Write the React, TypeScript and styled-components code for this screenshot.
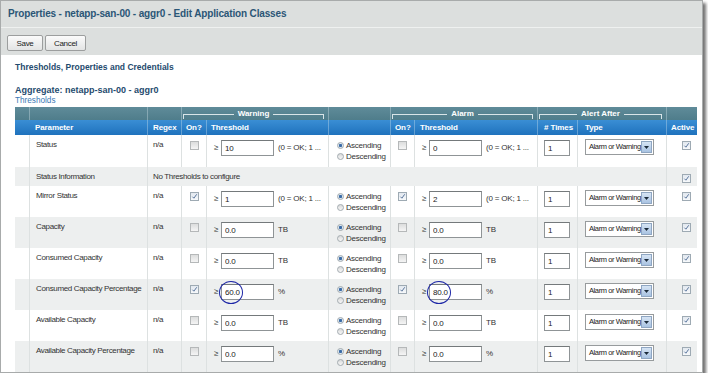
import React from 'react'
import styled, { createGlobalStyle } from 'styled-components'

interface IParam {
  name: string
  warnOn: boolean
  warn: string
  alarmOn: boolean
  alarm: string
  unit: string
  marked?: boolean
}

const STATE_UNIT = '(0 = OK; 1 ...'

const params: IParam[] = [
  { name: 'Status', warnOn: false, warn: '10', alarmOn: false, alarm: '0', unit: STATE_UNIT },
  { name: 'Mirror Status', warnOn: true, warn: '1', alarmOn: true, alarm: '2', unit: STATE_UNIT },
  { name: 'Capacity', warnOn: false, warn: '0.0', alarmOn: false, alarm: '0.0', unit: 'TB' },
  { name: 'Consumed Capacity', warnOn: false, warn: '0.0', alarmOn: false, alarm: '0.0', unit: 'TB' },
  {
    name: 'Consumed Capacity Percentage',
    warnOn: true,
    warn: '60.0',
    alarmOn: true,
    alarm: '80.0',
    unit: '%',
    marked: true,
  },
  { name: 'Available Capacity', warnOn: false, warn: '0.0', alarmOn: false, alarm: '0.0', unit: 'TB' },
  { name: 'Available Capacity Percentage', warnOn: false, warn: '0.0', alarmOn: false, alarm: '0.0', unit: '%' },
]

const COLUMNS = '14px 118px 34px 25px 122px 62px 24px 123px 40px 89px 31px'

const GlobalStyle = createGlobalStyle`
  html, body {
    margin: 0;
    padding: 0;
    background: #fff;
  }
  body {
    font-family: 'Liberation Sans', Arial, sans-serif;
    color: #333;
  }
`

const Frame = styled.div`
  box-sizing: border-box;
  width: 703px;
  height: 373px;
  border: 1px solid #a8abab;
  background: #fff;
  box-shadow: 3px 3px 3px rgba(0, 0, 0, 0.55);
  overflow: hidden;
`

const TitleBar = styled.div`
  height: 26px;
  line-height: 26px;
  padding-left: 7px;
  background: #dcdfde;
  border-bottom: 1px solid #eff1f0;
  color: #2b5676;
  font-size: 10px;
  font-weight: bold;
  letter-spacing: -0.15px;
`

const Toolbar = styled.div`
  display: flex;
  gap: 2px;
  height: 27px;
  box-sizing: border-box;
  padding: 7px 0 0 6px;
  background: #dcdfde;
`

const Button = styled.button<{ $w: number }>`
  width: ${({ $w }) => $w}px;
  height: 16px;
  padding: 0;
  border: 1px solid #9c9e9e;
  border-radius: 2px;
  background: linear-gradient(#fbfbfb, #e3e4e4);
  font-family: inherit;
  font-size: 8px;
  letter-spacing: -0.3px;
  color: #222;
`

const Content = styled.div`
  padding: 7px 0 0 14px;
`

const SectionTitle = styled.div`
  height: 11px;
  line-height: 11px;
  font-size: 8.5px;
  font-weight: bold;
  color: #1f4b6e;
`

const GroupTitle = styled.div`
  margin-top: 12px;
  height: 11px;
  line-height: 11px;
  font-size: 9px;
  font-weight: bold;
  color: #1f4b6e;
`

const SubTitle = styled.div`
  height: 10px;
  line-height: 10px;
  margin-bottom: 1px;
  font-size: 8.2px;
  color: #3a78b5;
`

const Table = styled.div`
  width: 682px;
`

const GroupHeader = styled.div`
  display: grid;
  grid-template-columns: ${COLUMNS};
  height: 13px;
  background: linear-gradient(#5f8b99, #4f7d8b);
`

const ColumnHeader = styled.div`
  display: grid;
  grid-template-columns: ${COLUMNS};
  height: 15px;
  background: linear-gradient(#3a8ed4, #1f72bd);
`

const HeadCell = styled.div<{ $span?: number; $pad?: number; $align?: string; $line?: boolean }>`
  grid-column: span ${({ $span }) => $span ?? 1};
  box-sizing: border-box;
  padding-left: ${({ $pad }) => $pad ?? 5}px;
  padding-right: 4px;
  border-left: ${({ $line }) => ($line ? '1px solid rgba(220, 235, 240, 0.35)' : 'none')};
  text-align: ${({ $align }) => $align ?? 'left'};
  color: #fff;
  font-size: 8px;
  font-weight: bold;
  letter-spacing: -0.1px;
  line-height: 15px;
  white-space: nowrap;
`

const GroupLabel = styled.div<{ $span: number }>`
  grid-column: span ${({ $span }) => $span};
  display: flex;
  align-items: center;
  gap: 4px;
  box-sizing: border-box;
  padding: 0 4px 0 1px;
  border-left: 1px solid rgba(220, 235, 240, 0.35);
  color: #fff;
  font-size: 8px;
  font-weight: bold;
  line-height: 13px;
`

const Bracket = styled.span<{ $side: 'left' | 'right' }>`
  flex: 1;
  height: 4px;
  margin-top: 5px;
  border-top: 1px solid #d9e5e8;
  border-${({ $side }) => $side}: 1px solid #d9e5e8;
`

const Row = styled.div<{ $shade: boolean; $height: number }>`
  display: grid;
  grid-template-columns: ${COLUMNS};
  height: ${({ $height }) => $height}px;
  background: ${({ $shade }) => ($shade ? '#edefef' : '#fff')};
`

const Cell = styled.div<{ $span?: number; $pad?: number; $first?: boolean; $top?: number }>`
  grid-column: span ${({ $span }) => $span ?? 1};
  box-sizing: border-box;
  padding: ${({ $top }) => $top ?? 5}px 0 0 ${({ $pad }) => $pad ?? 5}px;
  border-left: ${({ $first }) => ($first ? 'none' : '1px solid #dde1e1')};
  font-size: 8px;
  line-height: 10px;
  letter-spacing: -0.35px;
  white-space: nowrap;
`

const ThresholdLine = styled.div`
  display: flex;
  align-items: center;
  height: 16px;
`

const Ge = styled.span`
  width: 7px;
  font-size: 8px;
`

const Unit = styled.span`
  margin-left: 4px;
  font-size: 8px;
  letter-spacing: -0.2px;
`

const InputWrap = styled.span`
  position: relative;
  display: inline-block;
`

const TextInput = styled.input<{ $w: number }>`
  box-sizing: border-box;
  width: ${({ $w }) => $w}px;
  height: 16px;
  margin: 0;
  padding: 0 0 0 3px;
  border: 1px solid #8f9496;
  border-top-color: #74797b;
  border-radius: 0;
  background: #fff;
  font-family: inherit;
  font-size: 8px;
  letter-spacing: -0.2px;
  color: #222;
  outline: none;
`

const Marker = styled.span`
  position: absolute;
  left: -2px;
  top: -3px;
  width: 22px;
  height: 21px;
  border: 1.5px solid #1c25a6;
  border-radius: 50%;
  pointer-events: none;
`

const Box = styled.span<{ $on: boolean }>`
  position: relative;
  display: block;
  box-sizing: border-box;
  width: 9px;
  height: 9px;
  margin-top: 1px;
  border: 1px solid ${({ $on }) => ($on ? '#9eaab3' : '#b5b8b9')};
  background: ${({ $on }) =>
    $on ? 'linear-gradient(#e2e8ef, #f7f9fb)' : 'linear-gradient(#dcdddd, #f5f5f5)'};

  svg {
    position: absolute;
    left: 0;
    top: 0;
  }
`

const RadioLine = styled.div`
  display: flex;
  align-items: center;
  gap: 2px;
  height: 11px;
  line-height: 11px;
  letter-spacing: -0.25px;
`

const RadioDot = styled.span<{ $on: boolean }>`
  box-sizing: border-box;
  width: 7px;
  height: 7px;
  border-radius: 50%;
  border: 1px solid #a3abb0;
  background: ${({ $on }) =>
    $on
      ? 'radial-gradient(circle, #3a6ba6 0, #3a6ba6 1.3px, #dbe6f0 2px)'
      : 'linear-gradient(#d9dada, #f7f7f7)'};
`

const Select = styled.div`
  display: flex;
  align-items: center;
  box-sizing: border-box;
  width: 69px;
  height: 16px;
  margin-top: -1px;
  padding-left: 3px;
  border: 1px solid #979b9d;
  background: #fff;
  font-size: 7.5px;
  letter-spacing: -0.4px;
  color: #222;
  overflow: hidden;
`

const SelectLabel = styled.span`
  flex: 1;
`

const SelectButton = styled.span`
  display: flex;
  align-items: center;
  justify-content: center;
  box-sizing: border-box;
  width: 12px;
  height: 12px;
  margin-right: 1px;
  border: 1px solid #8fa6c2;
  background: linear-gradient(#d6e4f4, #a9c3e2);
`

function CheckBox({ on }: { on: boolean }) {
  return (
    <Box $on={on}>
      {on && (
        <svg width="7" height="7" viewBox="0 0 7 7">
          <path d="M1.4 3.7 L2.9 5.2 L5.7 1.3" fill="none" stroke="#4a6892" strokeWidth="0.9" />
        </svg>
      )}
    </Box>
  )
}

function Threshold({ value, unit, marked }: { value: string; unit: string; marked?: boolean }) {
  return (
    <ThresholdLine>
      <Ge>≥</Ge>
      <InputWrap>
        <TextInput $w={53} defaultValue={value} readOnly />
        {marked && <Marker />}
      </InputWrap>
      <Unit>{unit}</Unit>
    </ThresholdLine>
  )
}

function Direction() {
  return (
    <>
      <RadioLine>
        <RadioDot $on />
        Ascending
      </RadioLine>
      <RadioLine>
        <RadioDot $on={false} />
        Descending
      </RadioLine>
    </>
  )
}

function AlertType() {
  return (
    <Select>
      <SelectLabel>Alarm or Warning</SelectLabel>
      <SelectButton>
        <svg width="5" height="3" viewBox="0 0 5 3">
          <path d="M0 0 H5 L2.5 3 Z" fill="#1b2a3a" />
        </svg>
      </SelectButton>
    </Select>
  )
}

function ParamRow({ p, shade, height }: { p: IParam; shade: boolean; height: number }) {
  return (
    <Row $shade={shade} $height={height}>
      <Cell $first />
      <Cell $pad={6}>{p.name}</Cell>
      <Cell>n/a</Cell>
      <Cell $pad={8}>
        <CheckBox on={p.warnOn} />
      </Cell>
      <Cell $pad={7}>
        <Threshold value={p.warn} unit={p.unit} marked={p.marked} />
      </Cell>
      <Cell $pad={8}>
        <Direction />
      </Cell>
      <Cell $pad={7}>
        <CheckBox on={p.alarmOn} />
      </Cell>
      <Cell $pad={7}>
        <Threshold value={p.alarm} unit={p.unit} marked={p.marked} />
      </Cell>
      <Cell $pad={6}>
        <TextInput $w={26} defaultValue="1" readOnly />
      </Cell>
      <Cell $pad={7}>
        <AlertType />
      </Cell>
      <Cell $pad={15}>
        <CheckBox on />
      </Cell>
    </Row>
  )
}

export default function App() {
  const [status, ...rest] = params
  return (
    <>
      <GlobalStyle />
      <Frame>
        <TitleBar>Properties - netapp-san-00 - aggr0 - Edit Application Classes</TitleBar>
        <Toolbar>
          <Button $w={36}>Save</Button>
          <Button $w={41}>Cancel</Button>
        </Toolbar>
        <Content>
          <SectionTitle>Thresholds, Properties and Credentials</SectionTitle>
          <GroupTitle>Aggregate: netapp-san-00 - aggr0</GroupTitle>
          <SubTitle>Thresholds</SubTitle>
          <Table>
            <GroupHeader>
              <HeadCell />
              <HeadCell $line />
              <HeadCell $line />
              <GroupLabel $span={2}>
                <Bracket $side="left" />
                Warning
                <Bracket $side="right" />
              </GroupLabel>
              <HeadCell $line />
              <GroupLabel $span={2}>
                <Bracket $side="left" />
                Alarm
                <Bracket $side="right" />
              </GroupLabel>
              <GroupLabel $span={2}>
                <Bracket $side="left" />
                Alert After
                <Bracket $side="right" />
              </GroupLabel>
              <HeadCell $line />
            </GroupHeader>
            <ColumnHeader>
              <HeadCell />
              <HeadCell $pad={6}>Parameter</HeadCell>
              <HeadCell $line>Regex</HeadCell>
              <HeadCell $line $pad={4}>On?</HeadCell>
              <HeadCell $line $pad={4}>Threshold</HeadCell>
              <HeadCell $line />
              <HeadCell $line $pad={4}>On?</HeadCell>
              <HeadCell $line>Threshold</HeadCell>
              <HeadCell $line $align="right" $pad={2}>
                # Times
              </HeadCell>
              <HeadCell $line $pad={7}>Type</HeadCell>
              <HeadCell $line $pad={4}>Active</HeadCell>
            </ColumnHeader>
            <ParamRow p={status} shade={false} height={32} />
            <Row $shade $height={19}>
              <Cell $first />
              <Cell $pad={6}>Status Information</Cell>
              <Cell $span={8}>No Thresholds to configure</Cell>
              <Cell $pad={15} $top={6}>
                <CheckBox on />
              </Cell>
            </Row>
            {rest.map((p, i) => (
              <ParamRow key={p.name} p={p} shade={i % 2 === 1} height={31} />
            ))}
          </Table>
        </Content>
      </Frame>
    </>
  )
}
